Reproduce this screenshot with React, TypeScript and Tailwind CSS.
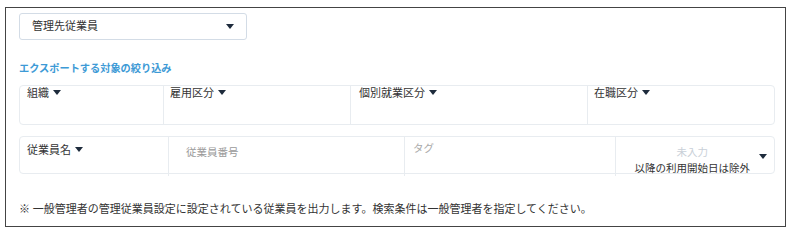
import React from "react";

const Caret = ({ className = "" }: { className?: string }) => (
  <svg width="8" height="5" viewBox="0 0 8 5" className={className}>
    <path d="M0 0 L8 0 L4 5 Z" fill="#1e2b3c" />
  </svg>
);

const Label = ({ text, className = "" }: { text: string; className?: string }) => (
  <div className={`flex items-center gap-[4px] text-[11px] leading-[11px] text-[#333] ${className}`}>
    <span>{text}</span>
    <Caret />
  </div>
);

export default function App() {
  return (
    <div
      className="w-[793px] h-[231px] bg-white pt-[7px] pl-[5px]"
      style={{ fontFamily: 'Lato, "Noto Sans CJK JP", sans-serif' }}
    >
      <div className="w-[781px] h-[220px] border border-[#444] pl-[13px] pt-[5px]">
        <div className="w-[228px] h-[27px] border border-[#d3dce6] rounded-[3px] flex items-center justify-between pl-[12px] pr-[12px]">
          <span className="text-[11px] text-[#333]">管理先従業員</span>
          <Caret />
        </div>
        <div className="mt-[21px] text-[10.2px] leading-[14px] font-bold text-[#3d9ad6]">
          エクスポートする対象の絞り込み
        </div>
        <div className="mt-[10px] w-[756px] h-[40px] border border-[#e8ecf0] rounded-[4px] grid grid-cols-[143px_187px_237px_1fr]">
          <div className="pl-[7px] pt-[1px]">
            <Label text="組織" />
          </div>
          <div className="border-l border-[#e8ecf0] pl-[6px] pt-[1px]">
            <Label text="雇用区分" />
          </div>
          <div className="border-l border-[#e8ecf0] pl-[8px] pt-[1px]">
            <Label text="個別就業区分" />
          </div>
          <div className="border-l border-[#e8ecf0] pl-[6px] pt-[1px]">
            <Label text="在職区分" />
          </div>
        </div>
        <div className="mt-[11px] w-[756px] h-[38px] border border-[#e8ecf0] rounded-[4px] grid grid-cols-[148px_236px_211px_1fr]">
          <div className="pl-[7px] pt-[7px]">
            <Label text="従業員名" />
          </div>
          <div className="border-l border-[#e8ecf0] pl-[17px] pt-[8px] text-[10.5px] leading-[14px] text-[#9a9a9a]">
            従業員番号
          </div>
          <div className="border-l border-[#e8ecf0] pl-[8px] pt-[4px] text-[10.5px] leading-[14px] text-[#aaaaaa]">
            タグ
          </div>
          <div className="border-l border-[#e8ecf0] flex justify-end items-center pr-[7px] gap-[9px]">
            <div className="self-start pt-[7px] flex flex-col items-center">
              <span className="text-[10.5px] leading-[16px] text-[#c9d0d8]">未入力</span>
              <span className="text-[10.5px] leading-[16px] text-[#333]">以降の利用開始日は除外</span>
            </div>
            <Caret />
          </div>
        </div>
        <div className="mt-[27px] text-[11px] leading-[16px] text-[#333]">
          ※ 一般管理者の管理従業員設定に設定されている従業員を出力します。検索条件は一般管理者を指定してください。
        </div>
      </div>
    </div>
  );
}
